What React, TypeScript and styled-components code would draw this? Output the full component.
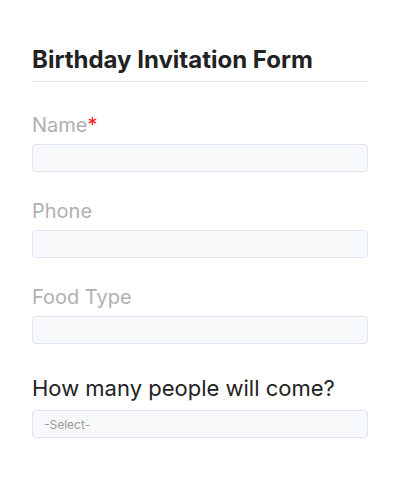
import styled, { createGlobalStyle } from "styled-components";

const GlobalStyle = createGlobalStyle`
  body {
    margin: 0;
    background: #ffffff;
    font-family: Inter, "Liberation Sans", sans-serif;
  }
`;

const Wrapper = styled.form`
  width: 336px;
  padding: 45px 32px 32px;
  display: flex;
  flex-direction: column;
`;

const Title = styled.h1`
  margin: 0;
  font-size: 24px;
  line-height: 30px;
  font-weight: 700;
  color: #222222;
  padding-bottom: 6px;
  border-bottom: 1px solid #e8e8e8;
`;

const Fields = styled.div`
  display: flex;
  flex-direction: column;
  gap: 27px;
  padding-top: 31px;
`;

const Field = styled.div<{ $spaced?: boolean }>`
  display: flex;
  flex-direction: column;
  gap: ${(p) => (p.$spaced ? "9px" : "7px")};
  margin-top: ${(p) => (p.$spaced ? "4px" : "0")};
`;

const Label = styled.label<{ $dark?: boolean }>`
  font-size: ${(p) => (p.$dark ? "22px" : "20px")};
  line-height: ${(p) => (p.$dark ? "26px" : "24px")};
  color: ${(p) => (p.$dark ? "#222222" : "#b0b0b0")};
`;

const Required = styled.span`
  color: #ff1a1a;
`;

const Input = styled.input`
  box-sizing: border-box;
  width: 100%;
  height: 28px;
  margin: 0;
  padding: 0 12px;
  background: #f7f8fa;
  border: 1px solid #dde3f7;
  border-radius: 4px;
  font-family: inherit;
  outline: none;
`;

const Select = styled.div`
  box-sizing: border-box;
  width: 100%;
  height: 28px;
  padding: 0 11px;
  display: flex;
  align-items: center;
  background: #f7f8fa;
  border: 1px solid #dde3f7;
  border-radius: 4px;
  font-size: 12px;
  color: #9a9a9a;
`;

const fields = [
  { label: "Name", required: true },
  { label: "Phone" },
  { label: "Food Type" },
];

export default function App() {
  return (
    <>
      <GlobalStyle />
      <Wrapper>
        <Title>Birthday Invitation Form</Title>
        <Fields>
          {fields.map((f) => (
            <Field key={f.label}>
              <Label>
                {f.label}
                {f.required && <Required>*</Required>}
              </Label>
              <Input type="text" />
            </Field>
          ))}
          <Field $spaced>
            <Label $dark>How many people will come?</Label>
            <Select>-Select-</Select>
          </Field>
        </Fields>
      </Wrapper>
    </>
  );
}
